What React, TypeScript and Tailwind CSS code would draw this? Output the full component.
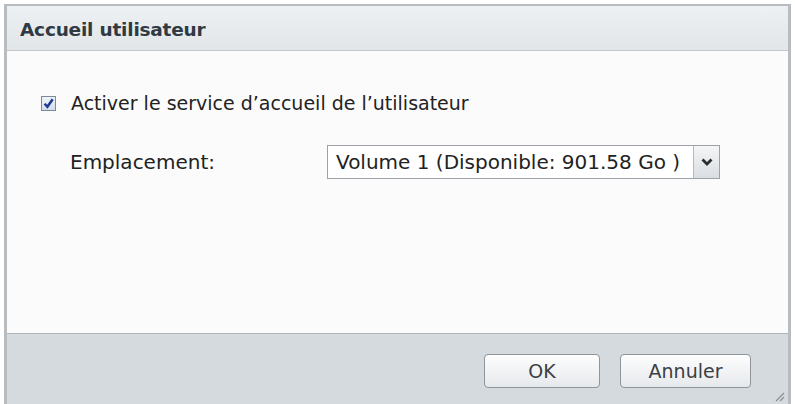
export default function App() {
  return (
    <div className="w-[795px] h-[404px] bg-white pt-[4px] pl-[4px] pr-[4px] overflow-hidden" style={{ fontFamily: '"DejaVu Sans", Verdana, sans-serif' }}>
      <div className="flex flex-col h-[404px] border-x-[3px] border-t-[2px] border-[#b8bcc0]">
        <div className="h-[45px] flex items-center px-[13px] pt-[3px] bg-gradient-to-b from-[#eef1f3] to-[#e2e6e9] border-b border-[#c4c8cc]">
          <span className="text-[18.5px] font-bold text-[#2f3a44] tracking-[-0.2px]">Accueil utilisateur</span>
        </div>
        <div className="h-[282px] bg-[#fbfbfb] flex flex-col pt-[43px] pl-[34px]">
          <label className="flex items-center gap-[15px] h-[18px]">
            <span className="w-[15px] h-[15px] border border-[#7a8a9a] bg-gradient-to-b from-[#f0f4fa] to-[#d2dcea] flex items-center justify-center">
              <svg width="11" height="11" viewBox="0 0 10 10">
                <path d="M1.5 5.2 L4 8 L8.8 1.2" fill="none" stroke="#1c3a94" strokeWidth="2.3" />
              </svg>
            </span>
            <span className="text-[19px] text-[#222]">Activer le service d’accueil de l’utilisateur</span>
          </label>
          <div className="flex items-center mt-[33px] pl-[29px]">
            <span className="w-[257px] text-[20px] text-[#222]">Emplacement:</span>
            <div className="flex h-[34px] w-[393px] border border-[#9ca2a8] bg-white">
              <div className="flex-1 flex items-center pl-[8px] text-[20px] text-[#222] whitespace-nowrap">Volume 1 (Disponible: 901.58 Go )</div>
              <div className="w-[26px] shrink-0 border-l border-[#b4b9be] bg-gradient-to-b from-[#f4f5f6] to-[#dadee2] flex items-center justify-center">
                <svg width="14" height="10" viewBox="0 0 14 10" className="shrink-0">
                  <path d="M2.5 2.5 L7 7 L11.5 2.5" fill="none" stroke="#2a2f35" strokeWidth="2.8" />
                </svg>
              </div>
            </div>
          </div>
        </div>
        <div className="flex-1 bg-[#d5dadf] border-t border-[#b0b5ba] relative">
          <div className="flex justify-end gap-[20px] pt-[20px] pr-[37px]">
            <button className="w-[116px] h-[34px] rounded-[4px] border border-[#8f959b] bg-gradient-to-b from-[#fdfdfd] to-[#e6e9ec] text-[19px] text-[#3a3f44]">OK</button>
            <button className="w-[131px] h-[34px] rounded-[4px] border border-[#8f959b] bg-gradient-to-b from-[#fdfdfd] to-[#e6e9ec] text-[19px] text-[#3a3f44]">Annuler</button>
          </div>
          <svg className="absolute right-[3px] top-[56px]" width="12" height="12" viewBox="0 0 12 12">
            <path d="M3 11 L11 3 M7 11 L11 7" stroke="#8a9096" strokeWidth="1.2" />
          </svg>
        </div>
      </div>
    </div>
  );
}
